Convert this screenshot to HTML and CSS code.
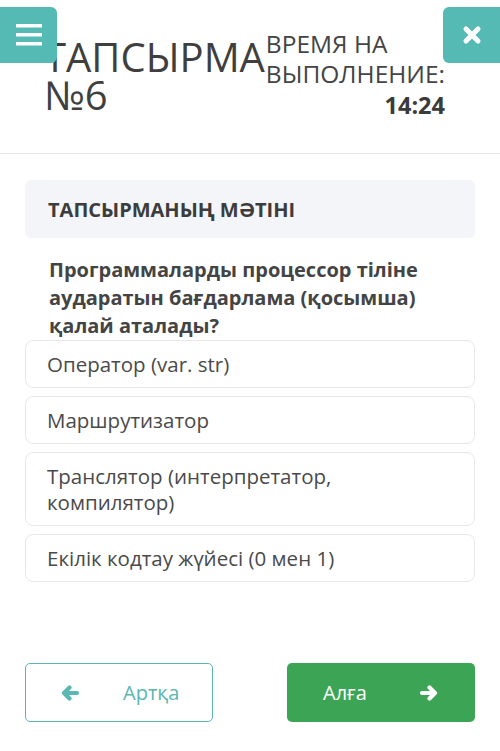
FILE: index.html
```html
<!DOCTYPE html>
<html lang="kk">
<head>
    <meta charset="UTF-8">
    <title>Тапсырма №6</title>
    <link rel="stylesheet" href="styles.css">
</head>
<body>

<header class="top">
    <button class="menu-btn" type="button" aria-label="Меню">
        <svg width="26" height="22" viewBox="0 0 26 22">
            <rect x="0" y="0" width="26" height="3.5" fill="#fff"/>
            <rect x="0" y="9" width="26" height="3.5" fill="#fff"/>
            <rect x="0" y="18" width="26" height="3.5" fill="#fff"/>
        </svg>
    </button>

    <h1 class="title">ТАПСЫРМА<br>№6</h1>

    <div class="timer">
        <div class="timer-label">ВРЕМЯ НА<br>ВЫПОЛНЕНИЕ:</div>
        <div class="timer-value">14:24</div>
    </div>

    <button class="close-btn" type="button" aria-label="Закрыть">
        <svg width="20" height="20" viewBox="0 0 20 20">
            <path d="M4 4 L16 16 M16 4 L4 16" stroke="#fff" stroke-width="5" stroke-linecap="round"/>
        </svg>
    </button>
</header>

<main class="task">
    <div class="task-head">ТАПСЫРМАНЫҢ МӘТІНІ</div>

    <p class="question">Программаларды процессор тіліне аударатын бағдарлама (қосымша) қалай аталады?</p>

    <ul class="answers">
        <li>Оператор (var. str)</li>
        <li>Маршрутизатор</li>
        <li>Транслятор (интерпретатор, компилятор)</li>
        <li>Екілік кодтау жүйесі (0 мен 1)</li>
    </ul>
</main>

<footer class="nav">
    <button class="nav-btn back" type="button">
        <svg width="20" height="16" viewBox="0 0 20 16">
            <path d="M17 8 L4 8 M9.5 2.5 L4 8 L9.5 13.5" fill="none" stroke="currentColor" stroke-width="4.2" stroke-linecap="round" stroke-linejoin="round"/>
        </svg>
        <span>Артқа</span>
    </button>
    <button class="nav-btn next" type="button">
        <span>Алға</span>
        <svg width="20" height="16" viewBox="0 0 20 16">
            <path d="M3 8 L16 8 M10.5 2.5 L16 8 L10.5 13.5" fill="none" stroke="currentColor" stroke-width="4.2" stroke-linecap="round" stroke-linejoin="round"/>
        </svg>
    </button>
</footer>

</body>
</html>
```

FILE: styles.css
```css
* {
    padding: 0;
    margin: 0;
    box-sizing: border-box;
    list-style: none;
}
body {
    font-family: "Open Sans", "Noto Sans", sans-serif;
    color: #444;
    background: #fff;
}
button {
    font-family: inherit;
    border: none;
    cursor: pointer;
}

/* шапка */
.top {
    position: relative;
    display: flex;
    justify-content: space-between;
    height: 154px;
    padding: 29px 55px 0 44px;
    border-bottom: 1px solid #e6e6e6;
}
.title {
    margin-top: 9px;
    font-weight: 400;
    font-size: 40px;
    line-height: 38px;
    color: #3f3f3f;
}
.timer {
    color: #444;
}
.timer-label {
    font-size: 24.5px;
    line-height: 30px;
}
.timer-value {
    text-align: right;
    font-weight: 700;
    font-size: 23.5px;
    line-height: 32px;
    color: #3b3b3b;
}
.menu-btn,
.close-btn {
    position: absolute;
    top: 7px;
    width: 57px;
    height: 56px;
    display: flex;
    align-items: center;
    justify-content: center;
    background: #56bab4;
}
.menu-btn {
    left: 0;
    border-radius: 0 6px 6px 0;
}
.close-btn {
    right: 0;
    border-radius: 6px 0 0 6px;
}

/* задание */
.task {
    padding: 26px 25px 0;
}
.task-head {
    height: 58px;
    padding: 0 23px;
    display: flex;
    align-items: center;
    background: #f3f5f8;
    border-radius: 6px;
    font-weight: 700;
    font-size: 20px;
    color: #3c3c3c;
}
.question {
    padding: 18px 24px 0;
    font-weight: 700;
    font-size: 20px;
    line-height: 28px;
    color: #444;
}
.answers {
    display: flex;
    flex-direction: column;
    gap: 8px;
}
.answers li {
    padding: 10px 60px 10px 21px;
    border: 1.5px solid #e8e8e8;
    border-radius: 8px;
    font-size: 20.5px;
    line-height: 26px;
    color: #4a4a4a;
}

/* кнопки */
.nav {
    display: flex;
    justify-content: space-between;
    padding: 81px 25px 0 25px;
}
.nav-btn {
    width: 188px;
    height: 59px;
    border-radius: 5px;
    display: flex;
    align-items: center;
    font-size: 20px;
}
.back {
    padding-left: 34px;
    gap: 43px;
    background: #fff;
    border: 1.5px solid #5ab7b1;
    color: #5ab7b1;
}
.next {
    padding-left: 36px;
    gap: 52px;
    background: #3ca555;
    color: #fff;
}
```
